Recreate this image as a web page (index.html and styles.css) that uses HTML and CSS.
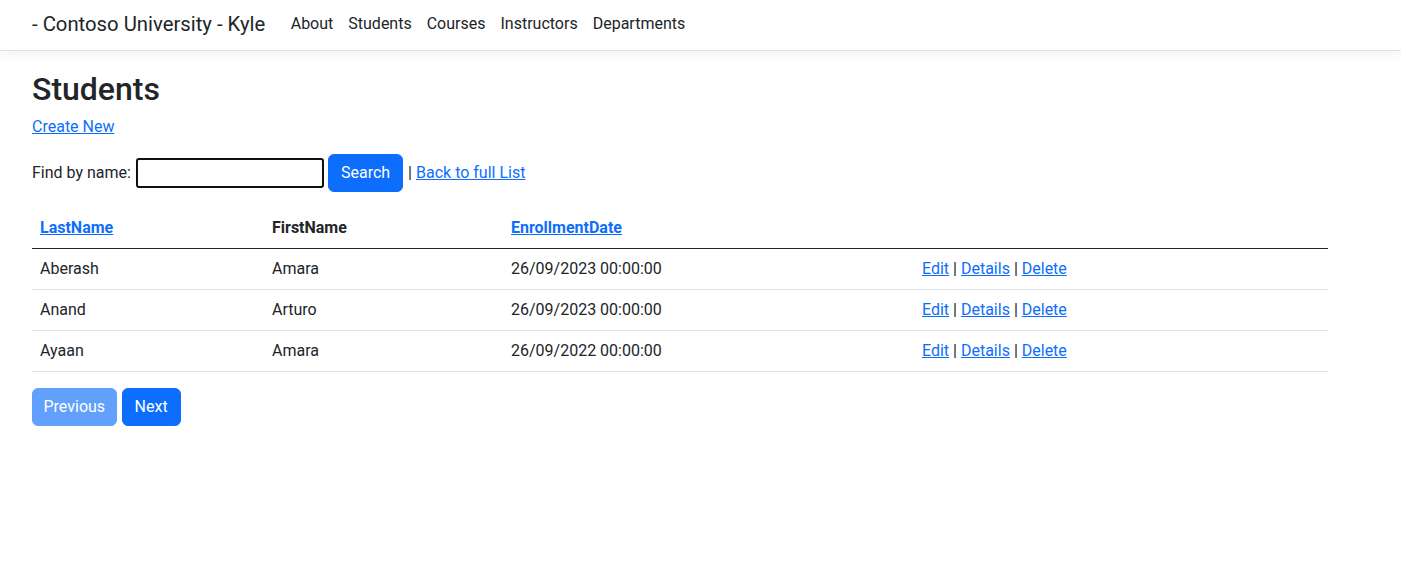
FILE: index.html
```html
<!DOCTYPE html>
<html lang="en">
<head>
<meta charset="utf-8">
<title>Students - Contoso University</title>
<link rel="stylesheet" href="styles.css">
</head>
<body>
<header class="navbar">
  <div class="container nav-inner">
    <a class="brand" href="#">- Contoso University - Kyle</a>
    <nav class="nav-links">
      <a href="#">About</a>
      <a href="#">Students</a>
      <a href="#">Courses</a>
      <a href="#">Instructors</a>
      <a href="#">Departments</a>
    </nav>
  </div>
</header>
<main class="container">
  <h1 class="title">Students</h1>
  <p class="para"><a class="link" href="#">Create New</a></p>
  <form class="search-row">
    <span>Find by name:</span>
    <input class="search-input" type="text">
    <button class="btn btn-primary" type="button">Search</button>
    <span class="sep">|</span>
    <a class="link" href="#">Back to full List</a>
  </form>
  <table class="table">
    <colgroup>
      <col class="c1"><col class="c2"><col class="c3"><col class="c4">
    </colgroup>
    <thead>
      <tr>
        <th><a class="link" href="#">LastName</a></th>
        <th>FirstName</th>
        <th><a class="link" href="#">EnrollmentDate</a></th>
        <th></th>
      </tr>
    </thead>
    <tbody>
      <tr>
        <td>Aberash</td><td>Amara</td><td>26/09/2023 00:00:00</td>
        <td><a class="link" href="#">Edit</a> | <a class="link" href="#">Details</a> | <a class="link" href="#">Delete</a></td>
      </tr>
      <tr>
        <td>Anand</td><td>Arturo</td><td>26/09/2023 00:00:00</td>
        <td><a class="link" href="#">Edit</a> | <a class="link" href="#">Details</a> | <a class="link" href="#">Delete</a></td>
      </tr>
      <tr>
        <td>Ayaan</td><td>Amara</td><td>26/09/2022 00:00:00</td>
        <td><a class="link" href="#">Edit</a> | <a class="link" href="#">Details</a> | <a class="link" href="#">Delete</a></td>
      </tr>
    </tbody>
  </table>
  <div class="pager">
    <a class="btn btn-primary disabled btn-prev" href="#">Previous</a>
    <a class="btn btn-primary" href="#">Next</a>
  </div>
</main>
</body>
</html>
```

FILE: styles.css
```css
* { box-sizing: border-box; }
html, body { margin: 0; padding: 0; }
body {
  font-family: Roboto, "Noto Sans", "Liberation Sans", sans-serif;
  font-size: 16px;
  line-height: 1.5;
  color: #212529;
  background: #fff;
}
.container {
  width: 1296px;
  margin-left: 32px;
}
.navbar {
  height: 51px;
  border-bottom: 1px solid #dee2e6;
  box-shadow: 0 4px 12px rgba(0,0,0,0.05);
  background: #fff;
}
.nav-inner {
  display: flex;
  align-items: center;
  height: 50px;
}
.brand {
  font-size: 20.3px;
  line-height: 30px;
  color: #212529;
  text-decoration: none;
  margin-right: 18px;
  padding-bottom: 2px;
}
.nav-links { display: flex; padding-bottom: 2px; }
.nav-links a {
  color: #212529;
  text-decoration: none;
  padding: 8px 7.5px;
  font-size: 16px;
  line-height: 24px;
}
main.container { padding-top: 18px; }
.title {
  font-size: 32px;
  font-weight: 500;
  line-height: 38px;
  padding-top: 1px;
  margin: 0 0 7px 0;
}
.para { margin: 0 0 15px 0; line-height: 24px; }
.link { color: #0d6efd; text-decoration: underline; }
.search-row {
  display: flex;
  align-items: center;
  height: 38px;
  margin: 0 0 16px 0;
}
.search-input {
  width: 188px;
  height: 30px;
  margin: 0 4px 0 5px;
  border: 2px solid #101010;
  border-radius: 3px;
  font: inherit;
  padding: 0 4px;
}
.sep { margin: 0 4px 0 5px; color: #212529; }
.btn {
  display: inline-flex;
  align-items: center;
  justify-content: center;
  height: 38px;
  padding: 0 12px;
  font: inherit;
  font-size: 16px;
  border-radius: 6px;
  border: 1px solid transparent;
  text-decoration: none;
  cursor: pointer;
}
.btn-primary { background: #0d6efd; border-color: #0d6efd; color: #fff; }
.btn-primary.disabled { opacity: 0.65; }
.btn-prev { padding: 0 10.5px; }
.table {
  width: 1296px;
  border-collapse: collapse;
  table-layout: fixed;
  margin-bottom: 16px;
}
.c1 { width: 232px; }
.c2 { width: 239px; }
.c3 { width: 411px; }
.c4 { width: 414px; }
.table th, .table td {
  text-align: left;
  padding: 8px;
  line-height: 24px;
  vertical-align: top;
  border-bottom: 1px solid #dee2e6;
}
.table th { font-weight: 700; border-bottom: 1px solid #212529; }
.pager { display: flex; gap: 5px; }
```
